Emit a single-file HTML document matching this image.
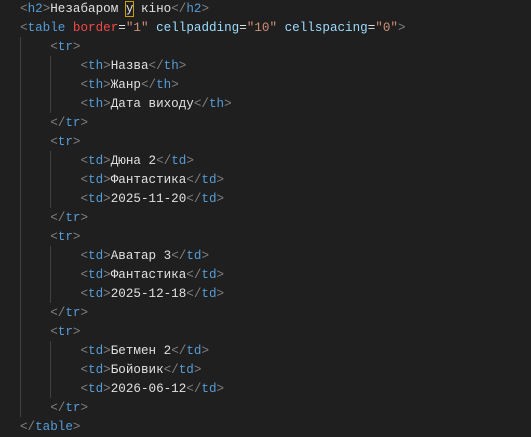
<!DOCTYPE html>
<html><head><meta charset="utf-8"><style>
html,body{margin:0;padding:0;background:#1f1f1f;width:531px;height:435px;overflow:hidden}
.c{position:absolute;left:20px;top:0px;font-family:"Liberation Mono","DejaVu Sans Mono",monospace;font-size:12.6px;line-height:19px;color:#e0e0e0;white-space:pre}
.b{color:#808080}.t{color:#569cd6}.a{color:#f44747}.s{color:#ce9178}.p{color:#9cdcfe}
.g{position:absolute;width:1px;background:#404040}
.cur{outline:1px solid #c8a000}
</style></head><body>
<div class="g" style="left:20px;top:37px;height:380px"></div>
<div class="g" style="left:50px;top:56px;height:57px"></div>
<div class="g" style="left:50px;top:151px;height:57px"></div>
<div class="g" style="left:50px;top:246px;height:57px"></div>
<div class="g" style="left:50px;top:341px;height:57px"></div>
<div class="c"><span class="b">&lt;</span><span class="t">h2</span><span class="b">&gt;</span>Незабаром <span class="cur">у</span> кіно<span class="b">&lt;/</span><span class="t">h2</span><span class="b">&gt;</span>
<span class="b">&lt;</span><span class="t">table</span> <span class="a">border</span>=<span class="s">"1"</span> <span class="p">cellpadding</span>=<span class="s">"10"</span> <span class="p">cellspacing</span>=<span class="s">"0"</span><span class="b">&gt;</span>
    <span class="b">&lt;</span><span class="t">tr</span><span class="b">&gt;</span>
        <span class="b">&lt;</span><span class="t">th</span><span class="b">&gt;</span>Назва<span class="b">&lt;/</span><span class="t">th</span><span class="b">&gt;</span>
        <span class="b">&lt;</span><span class="t">th</span><span class="b">&gt;</span>Жанр<span class="b">&lt;/</span><span class="t">th</span><span class="b">&gt;</span>
        <span class="b">&lt;</span><span class="t">th</span><span class="b">&gt;</span>Дата виходу<span class="b">&lt;/</span><span class="t">th</span><span class="b">&gt;</span>
    <span class="b">&lt;/</span><span class="t">tr</span><span class="b">&gt;</span>
    <span class="b">&lt;</span><span class="t">tr</span><span class="b">&gt;</span>
        <span class="b">&lt;</span><span class="t">td</span><span class="b">&gt;</span>Дюна 2<span class="b">&lt;/</span><span class="t">td</span><span class="b">&gt;</span>
        <span class="b">&lt;</span><span class="t">td</span><span class="b">&gt;</span>Фантастика<span class="b">&lt;/</span><span class="t">td</span><span class="b">&gt;</span>
        <span class="b">&lt;</span><span class="t">td</span><span class="b">&gt;</span>2025-11-20<span class="b">&lt;/</span><span class="t">td</span><span class="b">&gt;</span>
    <span class="b">&lt;/</span><span class="t">tr</span><span class="b">&gt;</span>
    <span class="b">&lt;</span><span class="t">tr</span><span class="b">&gt;</span>
        <span class="b">&lt;</span><span class="t">td</span><span class="b">&gt;</span>Аватар 3<span class="b">&lt;/</span><span class="t">td</span><span class="b">&gt;</span>
        <span class="b">&lt;</span><span class="t">td</span><span class="b">&gt;</span>Фантастика<span class="b">&lt;/</span><span class="t">td</span><span class="b">&gt;</span>
        <span class="b">&lt;</span><span class="t">td</span><span class="b">&gt;</span>2025-12-18<span class="b">&lt;/</span><span class="t">td</span><span class="b">&gt;</span>
    <span class="b">&lt;/</span><span class="t">tr</span><span class="b">&gt;</span>
    <span class="b">&lt;</span><span class="t">tr</span><span class="b">&gt;</span>
        <span class="b">&lt;</span><span class="t">td</span><span class="b">&gt;</span>Бетмен 2<span class="b">&lt;/</span><span class="t">td</span><span class="b">&gt;</span>
        <span class="b">&lt;</span><span class="t">td</span><span class="b">&gt;</span>Бойовик<span class="b">&lt;/</span><span class="t">td</span><span class="b">&gt;</span>
        <span class="b">&lt;</span><span class="t">td</span><span class="b">&gt;</span>2026-06-12<span class="b">&lt;/</span><span class="t">td</span><span class="b">&gt;</span>
    <span class="b">&lt;/</span><span class="t">tr</span><span class="b">&gt;</span>
<span class="b">&lt;/</span><span class="t">table</span><span class="b">&gt;</span></div>
</body></html>
